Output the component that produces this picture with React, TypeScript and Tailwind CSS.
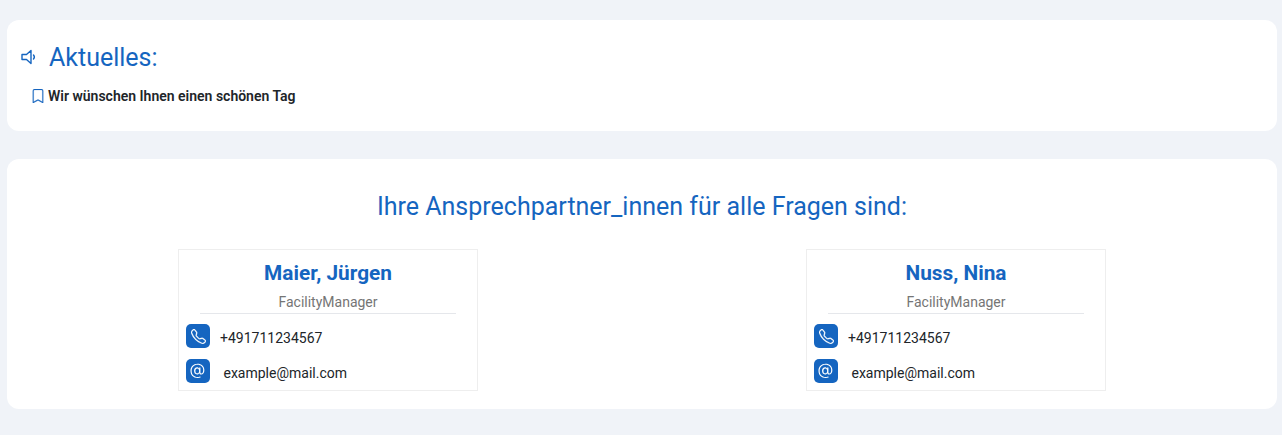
import { BsBookmark, BsTelephone, BsAt } from "react-icons/bs";

function Contact({ name }: { name: string }) {
  return (
    <div className="flex justify-center">
      <div className="h-[142px] w-[300px] border border-[#eeeeee] bg-white">
        <div className="mt-[10px] text-center text-[20.8px] leading-[26px] font-bold text-[#1565c0]">{name}</div>
        <div className="mt-[6px] text-center text-[14px] leading-[20px] text-[#757575]">FacilityManager</div>
        <div className="mx-[21px] mt-[1px] h-px bg-[#e5e7eb]" />
        <div className="mt-[10px] flex h-6 items-center pl-[7px]">
          <span className="flex h-6 w-6 items-center justify-center rounded-[5px] bg-[#1565c0] text-white">
            <BsTelephone size={15} stroke="currentColor" strokeWidth={0.25} />
          </span>
          <span className="ml-[10px] pt-[4px] text-[14px] leading-5 text-[#212529]">+491711234567</span>
        </div>
        <div className="mt-[11px] flex h-6 items-center pl-[7px]">
          <span className="flex h-6 w-6 items-center justify-center rounded-[5px] bg-[#1565c0] text-white">
            <BsAt size={20} />
          </span>
          <span className="ml-[13.5px] pt-[4px] text-[14px] leading-5 text-[#212529]">example@mail.com</span>
        </div>
      </div>
    </div>
  );
}

export default function App() {
  return (
    <div className="h-[435px] overflow-hidden bg-[#f0f3f8] pt-5 pr-[5px] pl-[7px] font-['Roboto',sans-serif]">
      <section className="h-[111px] rounded-xl bg-white pt-[22px] pl-[14px]">
        <div className="flex h-8 items-center text-[#1565c0]">
          <svg width="16" height="16" viewBox="0 0 16 16" fill="none" stroke="currentColor" strokeWidth="1.4" className="-mt-[3px]">
            <path d="M1 5.5h4.5L10 1.5v13l-4.5-4H1z" strokeLinejoin="round" />
            <path d="M12.5 6a3 3 0 0 1 0 4" strokeLinecap="round" />
          </svg>
          <h2 className="ml-[12px] text-[25px] leading-8 font-normal">Aktuelles:</h2>
        </div>
        <div className="mt-[12px] flex items-center pl-[10px]">
          <BsBookmark size={14} className="text-[#1565c0]" stroke="currentColor" strokeWidth={0.25} />
          <span className="ml-[3px] text-[14px] leading-5 font-semibold text-[#212529]">Wir wünschen Ihnen einen schönen Tag</span>
        </div>
      </section>
      <section className="mt-[28px] h-[250px] rounded-xl bg-white pt-[30px] pl-[7px]">
        <h2 className="w-[1256px] text-center text-[25px] leading-9 font-normal text-[#1565c0]">Ihre Ansprechpartner_innen für alle Fragen sind:</h2>
        <div className="mt-[24px] grid grid-cols-[628px_628px]">
          <Contact name="Maier, Jürgen" />
          <Contact name="Nuss, Nina" />
        </div>
      </section>
    </div>
  );
}
